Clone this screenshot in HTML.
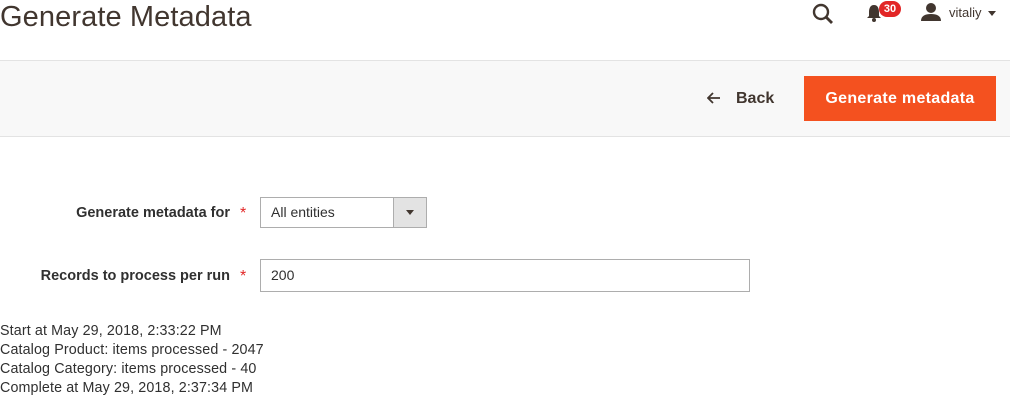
<!DOCTYPE html>
<html><head><meta charset="utf-8"><style>
*{box-sizing:border-box;margin:0;padding:0}
body{width:1010px;height:410px;overflow:hidden;background:#fff;font-family:"Liberation Sans",sans-serif;color:#303030;position:relative}
.abs{position:absolute}
h1{position:absolute;left:0;top:0;font-size:29px;font-weight:normal;color:#41362f;line-height:34px;letter-spacing:.1px}
.bar{position:absolute;left:0;top:60px;width:1010px;height:77px;background:#f8f8f8;border-top:1px solid #e3e3e3;border-bottom:1px solid #e3e3e3}
.btn{position:absolute;left:804px;top:76px;width:192px;height:45px;background:#f4511f;color:#fff;font-size:16px;font-weight:bold;text-align:center;line-height:45px;letter-spacing:.3px}
.back{position:absolute;top:90px;font-size:16px;font-weight:bold;color:#41362f}
.lbl{position:absolute;font-size:14.5px;font-weight:bold;color:#303030;text-align:right;width:230px;left:0}
.star{position:absolute;color:#e22626;font-size:16px}
.sel{position:absolute;left:260px;top:197px;width:167px;height:31px;border:1px solid #adadad;background:#fff;font-size:14px;padding:6px 10px}
.sel .arr{position:absolute;right:0;top:0;width:33px;height:29px;background:#e3e3e3;border-left:1px solid #adadad}
.inp{position:absolute;left:260px;top:259px;width:490px;height:33px;border:1px solid #adadad;font-size:14px;padding:7px 10px}
.log{position:absolute;left:0;top:322px;font-size:14.3px;line-height:19px;color:#303030;letter-spacing:.12px}
</style></head><body>
<h1>Generate Metadata</h1>
<svg class="abs" style="left:812px;top:3px" width="22" height="22" viewBox="0 0 22 22"><circle cx="9" cy="9" r="7" fill="none" stroke="#41362f" stroke-width="2.4"/><line x1="14" y1="14" x2="20" y2="20" stroke="#41362f" stroke-width="2.8"/></svg>
<svg class="abs" style="left:866px;top:4px" width="16" height="18" viewBox="0 0 16 18"><path d="M8 1C4 1 3 5 3 8v4l-2 2h14l-2-2V8c0-3-1-7-5-7z" fill="#41362f"/><circle cx="8" cy="16" r="2" fill="#41362f"/></svg>
<div class="abs" style="left:879px;top:1px;width:22px;height:16px;border-radius:8px;background:#e22626;color:#fff;font-size:11px;font-weight:bold;text-align:center;line-height:16px">30</div>
<svg class="abs" style="left:921px;top:3px" width="20" height="18" viewBox="0 0 20 18"><ellipse cx="10" cy="5" rx="5" ry="5" fill="#41362f"/><path d="M0 18c0-5 4-7 10-7s10 2 10 7z" fill="#41362f"/></svg>
<div class="abs" style="left:949px;top:5px;font-size:13px;color:#41362f">vitaliy</div>
<div class="abs" style="left:988px;top:11px;width:0;height:0;border-left:4px solid transparent;border-right:4px solid transparent;border-top:5px solid #41362f"></div>
<div class="bar"></div>
<svg class="abs" style="left:707px;top:92px" width="14" height="12" viewBox="0 0 14 12"><path d="M13 6H2M6 1L1 6l5 5" fill="none" stroke="#41362f" stroke-width="1.8"/></svg>
<div class="back" style="left:736px">Back</div>
<div class="btn">Generate metadata</div>
<div class="lbl" style="top:205px">Generate metadata for</div>
<div class="star" style="left:240px;top:205px">*</div>
<div class="sel">All entities<div class="arr"><div style="position:absolute;left:12px;top:12px;border-left:4px solid transparent;border-right:4px solid transparent;border-top:5px solid #41362f"></div></div></div>
<div class="lbl" style="top:268px">Records to process per run</div>
<div class="star" style="left:240px;top:268px">*</div>
<div class="inp">200</div>
<div class="log">Start at May 29, 2018, 2:33:22 PM<br>Catalog Product: items processed - 2047<br>Catalog Category: items processed - 40<br>Complete at May 29, 2018, 2:37:34 PM</div>
</body></html>
